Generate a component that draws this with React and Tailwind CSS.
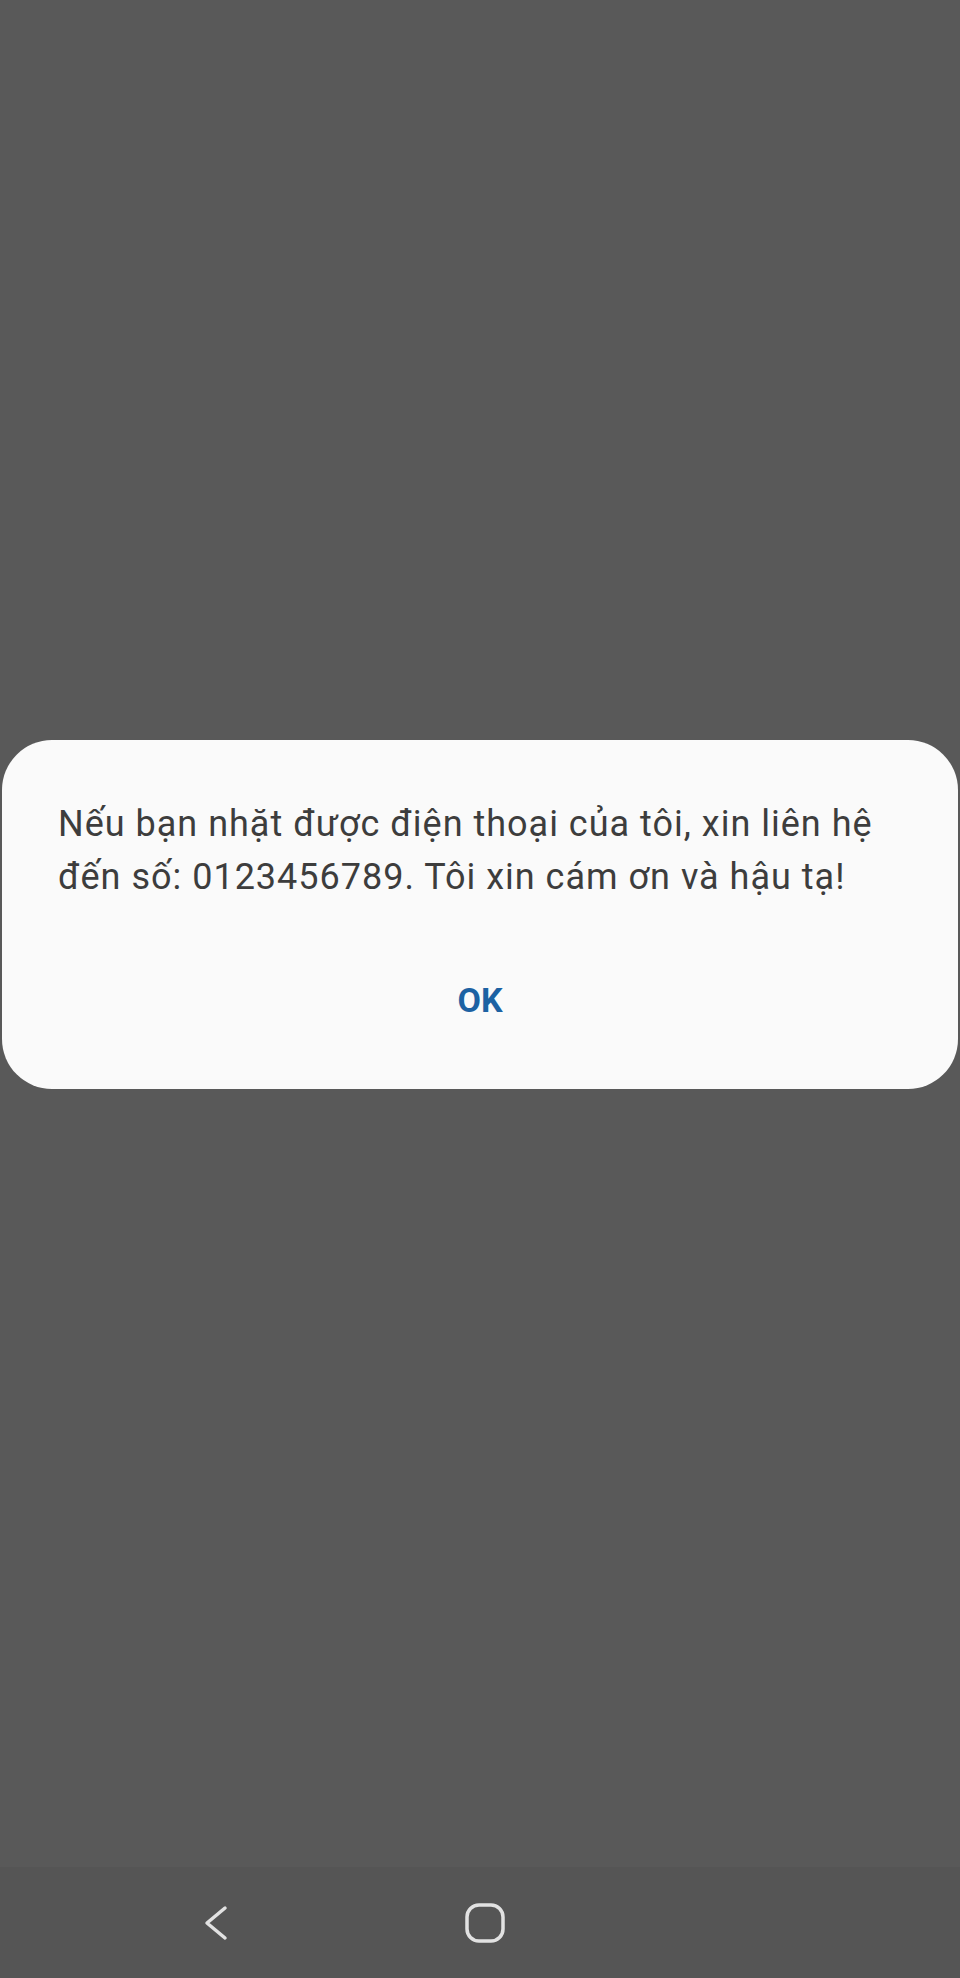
export default function App() {
  return (
    <div className="flex h-[1978px] w-[960px] flex-col bg-[#595959] font-['Roboto',sans-serif]">
      {/* dialog area */}
      <main className="flex-1 px-[2px] pt-[740px]">
        <div className="flex flex-col rounded-[50px] bg-[#fafafa] px-[48px] pb-[68px] pt-[58px]">
          <p className="pl-[8px] text-[36px] leading-[53px] tracking-[1px] text-[#3d3d3d]">
            Nếu bạn nhặt được điện thoại của tôi, xin liên hệ đến số: 0123456789. Tôi xin cám ơn và hậu tạ!
          </p>
          <button className="mt-[75px] self-center text-[34px] font-bold leading-[42px] text-[#1c62a3]">
            OK
          </button>
        </div>
      </main>

      {/* navigation bar */}
      <nav className="flex h-[111px] items-center bg-[#555555] pl-[204px]">
        <svg width="24" height="36" viewBox="0 0 24 36" fill="none" className="text-[#e2e2e2]">
          <path d="M21 3 L3 18 L21 33" stroke="currentColor" strokeWidth="3.5" strokeLinecap="round" strokeLinejoin="round" />
        </svg>
        <svg width="40" height="40" viewBox="0 0 40 40" fill="none" className="ml-[237px] text-[#e2e2e2]">
          <rect x="2" y="2" width="36" height="36" rx="12" stroke="currentColor" strokeWidth="3.5" />
        </svg>
      </nav>
    </div>
  );
}
